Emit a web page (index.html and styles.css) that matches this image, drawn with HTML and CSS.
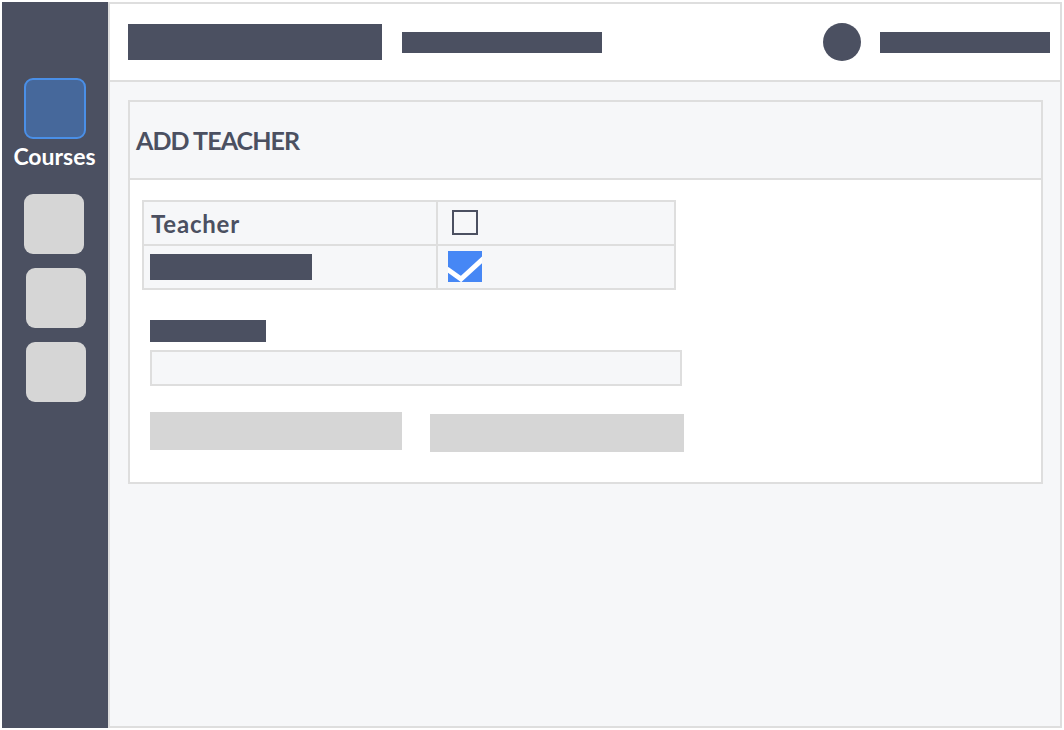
FILE: index.html
```html
<!DOCTYPE html>
<html>
<head>
	<title>Add Teacher</title>
	<link rel="stylesheet" href="styles.css">
</head>
<body>
<div id="app">
	<nav id="sidebar">
		<div class="nav-item">
			<div class="nav-icon active"></div>
			<span>Courses</span>
		</div>
		<div class="nav-icon grey first"></div>
		<div class="nav-icon grey"></div>
		<div class="nav-icon grey"></div>
	</nav>
	<section id="main">
		<header id="top">
			<div class="bar title"></div>
			<div class="bar crumb"></div>
			<div class="spacer"></div>
			<div class="avatar"></div>
			<div class="bar user"></div>
		</header>
		<div id="content">
			<div class="card">
				<div class="card-head">ADD TEACHER</div>
				<div class="card-body">
					<div class="grid">
						<div class="cell name">Teacher</div>
						<div class="cell"><span class="box"></span></div>
						<div class="cell"><div class="bar row-bar"></div></div>
						<div class="cell">
							<svg class="checked" width="34" height="31" viewBox="0 0 34 31">
								<rect width="34" height="31" fill="#4687f5"/>
								<polyline points="-1,18 13,28 36,7" fill="none" stroke="#fff" stroke-width="5"/>
							</svg>
						</div>
					</div>
					<div class="bar label"></div>
					<input class="field" type="text">
					<div class="actions">
						<button type="button" class="btn"></button>
						<button type="button" class="btn second"></button>
					</div>
				</div>
			</div>
		</div>
	</section>
</div>
</body>
</html>
```

FILE: styles.css
```css
body {
	margin: 0;
	background: #fff;
	font-family: "Lato", "Open Sans", sans-serif;
	color: #4b5061;
}
#app {
	display: flex;
	margin: 2px;
	height: 726px;
}
#sidebar {
	width: 106px;
	background: #4b5061;
	display: flex;
	flex-direction: column;
	align-items: flex-start;
	padding-top: 76px;
	box-sizing: border-box;
}
.nav-item {
	width: 106px;
	display: flex;
	flex-direction: column;
	align-items: center;
}
.nav-item span {
	color: #fff;
	font-weight: bold;
	font-size: 23px;
	line-height: 26px;
	margin-top: 4px;
	margin-right: 1px;
}
.nav-icon {
	width: 60px;
	height: 60px;
	border-radius: 9px;
	box-sizing: border-box;
}
.nav-icon.active {
	width: 62px;
	height: 61px;
	background: #46689b;
	border: 2px solid #4a8fe7;
}
.nav-icon.grey {
	background: #d6d6d6;
	margin-left: 24px;
	margin-top: 14px;
}
.nav-icon.grey.first {
	margin-left: 22px;
	margin-top: 25px;
}
#main {
	flex: 1;
	border: 2px solid #dedede;
	background: #f6f7f9;
	display: flex;
	flex-direction: column;
}
#top {
	height: 76px;
	background: #fff;
	border-bottom: 2px solid #dedede;
	display: flex;
	align-items: center;
	padding: 0 10px 0 18px;
}
.bar {
	background: #4b5061;
}
.title {
	width: 254px;
	height: 36px;
	margin-right: 20px;
}
.crumb {
	width: 200px;
	height: 21px;
}
.spacer {
	flex: 1;
}
.avatar {
	width: 38px;
	height: 38px;
	border-radius: 50%;
	background: #4b5061;
	margin-right: 19px;
}
.user {
	width: 170px;
	height: 21px;
}
#content {
	padding: 18px 17px 0 18px;
}
.card {
	border: 2px solid #dedede;
	background: #fff;
}
.card-head {
	height: 78px;
	background: #f6f7f9;
	border-bottom: 2px solid #dedede;
	display: flex;
	align-items: center;
	padding-left: 6px;
	font-size: 25px;
	font-weight: bold;
	letter-spacing: -0.9px;
	box-sizing: border-box;
}
.card-body {
	padding: 20px 0 30px 12px;
}
.grid {
	display: grid;
	grid-template-columns: 292px 236px;
	grid-template-rows: 42px 42px;
	gap: 2px;
	padding: 2px;
	background: #dedede;
	width: 530px;
}
.cell {
	background: #f6f7f9;
	display: flex;
	align-items: center;
}
.name {
	padding-left: 7px;
	font-size: 24px;
	font-weight: bold;
	letter-spacing: 0.8px;
}
.box {
	width: 26px;
	height: 25px;
	border: 2px solid #4b5061;
	box-sizing: border-box;
	margin-left: 14px;
	margin-top: -1px;
}
.row-bar {
	width: 162px;
	height: 26px;
	margin-left: 6px;
}
.checked {
	display: block;
	margin-left: 10px;
	margin-top: -1px;
}
.label {
	width: 116px;
	height: 22px;
	margin: 30px 0 0 8px;
}
.field {
	display: block;
	width: 532px;
	height: 36px;
	margin: 8px 0 0 8px;
	border: 2px solid #dedede;
	background: #f6f7f9;
	box-sizing: border-box;
	padding: 0;
}
.actions {
	display: flex;
	align-items: flex-start;
	margin: 26px 0 0 8px;
}
.btn {
	width: 252px;
	height: 38px;
	border: 0;
	padding: 0;
	background: #d6d6d6;
}
.btn.second {
	width: 254px;
	margin: 2px 0 0 28px;
}
```
